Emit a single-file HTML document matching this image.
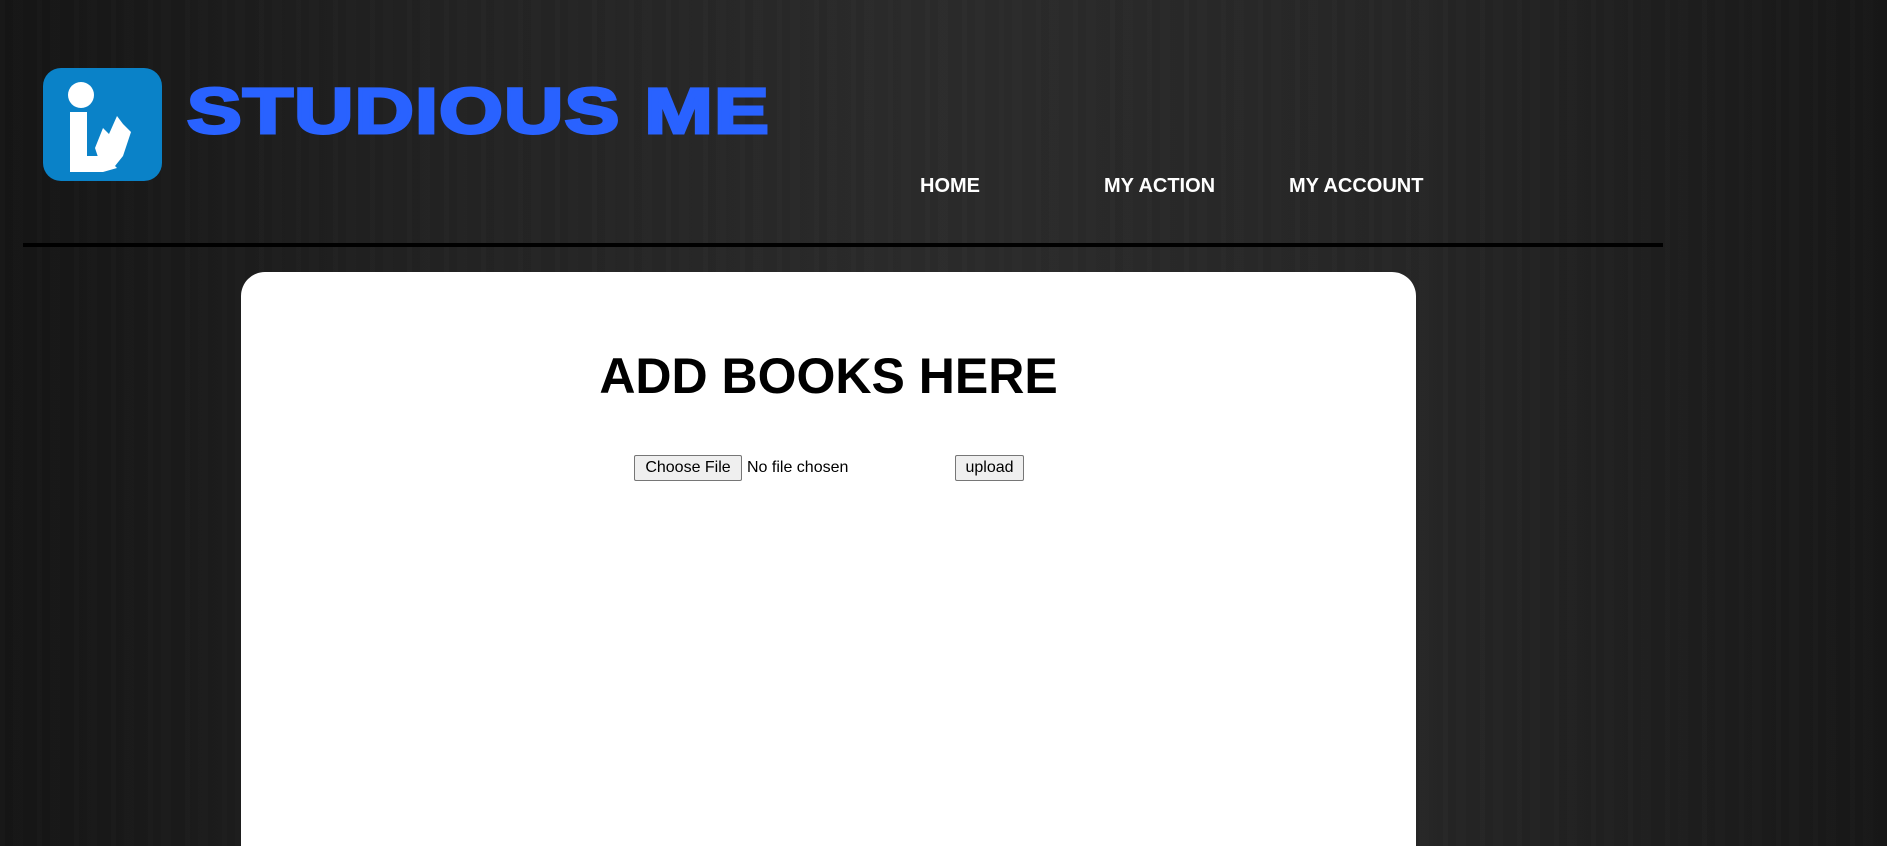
<!DOCTYPE html>
<html><head><meta charset="utf-8"><style>
html,body{margin:0;padding:0;width:1887px;height:846px;overflow:hidden;}
body{position:relative;font-family:"Liberation Sans",Arial,sans-serif;
background:
repeating-linear-gradient(90deg,rgba(255,255,255,0.012) 0 5px,rgba(0,0,0,0.015) 5px 13px,rgba(255,255,255,0.008) 13px 23px,rgba(0,0,0,0.01) 23px 37px),
linear-gradient(90deg,#151515 0%,#232323 25%,#2b2b2b 50%,#262626 75%,#171717 100%);}
.icon{position:absolute;left:43px;top:68px;width:119px;height:113px;background:#0a82c8;border-radius:18px;}
.logo{position:absolute;left:187px;top:76px;font-size:64px;font-weight:900;color:#2962ff;letter-spacing:1px;white-space:nowrap;transform-origin:0 0;transform:scale(1.28,1);line-height:70px;-webkit-text-stroke:3px #2962ff;}
.nav{position:absolute;top:175px;color:#fff;font-weight:bold;font-size:20px;}
.line{position:absolute;left:23px;top:243px;width:1640px;height:4px;background:#000;}
.card{position:absolute;left:241px;top:272px;width:1175px;height:574px;background:#fff;border-radius:24px 24px 0 0;}
h1{position:absolute;left:0;width:1175px;top:348px;margin:0;text-align:center;font-size:50px;line-height:56px;font-weight:bold;color:#000;}
.btn{position:absolute;top:455px;height:26px;box-sizing:border-box;border:1px solid #767676;background:#efefef;border-radius:2px;font-size:16px;line-height:24px;text-align:center;color:#000;}
.txt{position:absolute;top:455px;font-size:16px;line-height:26px;color:#000;}
</style></head><body>
<div class="icon"><svg width="119" height="113" viewBox="0 0 119 113">
<circle cx="38" cy="27" r="13" fill="#fff"/>
<path d="M27 44 H44 V88 H62 L74 100 L60 104 H27 Z" fill="#fff"/>
<path d="M52 80 L60 60 L66 66 L74 48 L80 56 L88 64 L80 88 L72 98 L56 92 Z" fill="#fff"/>
</svg></div>
<div class="logo">STUDIOUS ME</div>
<div class="nav" style="left:920px">HOME</div>
<div class="nav" style="left:1104px">MY ACTION</div>
<div class="nav" style="left:1289px">MY ACCOUNT</div>
<div class="line"></div>
<div class="card"></div>
<h1 style="left:241px">ADD BOOKS HERE</h1>
<div class="btn" style="left:634px;width:108px">Choose File</div>
<div class="txt" style="left:747px">No file chosen</div>
<div class="btn" style="left:955px;width:69px">upload</div>
</body></html>
